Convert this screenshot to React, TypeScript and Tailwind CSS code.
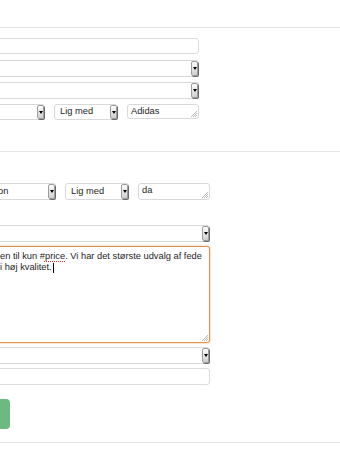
import React from 'react';

// Lille grå "dropdown" knap i højre side af select-feltet
const SelectArrow: React.FC = () => (
  <div className="flex w-[7px] shrink-0 self-stretch items-center justify-center rounded-[2px] border border-[#9c9c9c] bg-linear-to-b from-[#fdfdfd] to-[#cfcfcf] shadow-[1px_1px_0_#6a6a6a]">
    <div className="h-0 w-0 border-l-[2.5px] border-r-[2.5px] border-t-[3px] border-l-transparent border-r-transparent border-t-black" />
  </div>
);

const Grip: React.FC = () => (
  <svg width="7" height="7" viewBox="0 0 7 7" className="absolute bottom-[1px] right-[1px]">
    <path d="M7 1 L1 7 M7 3 L3 7 M7 5 L5 7" stroke="#a8a8a8" strokeWidth="0.8" />
  </svg>
);

interface SelectProps {
  className: string;
  value?: string;
  textClass?: string;
}

const Select: React.FC<SelectProps> = ({ className, value = '', textClass = 'pl-[4px]' }) => (
  <div className={`flex items-stretch rounded-[3px] border border-[#d9d9d9] bg-white ${className}`}>
    <div className={`flex flex-1 items-center overflow-hidden whitespace-nowrap ${textClass}`}>{value}</div>
    <SelectArrow />
  </div>
);

const SmallArea: React.FC<{ className: string; value: string }> = ({ className, value }) => (
  <div className={`relative rounded-[3px] border border-[#d9d9d9] bg-white pl-[3px] pt-[1px] leading-[11px] ${className}`}>
    {value}
    <Grip />
  </div>
);

const Line: React.FC<{ className: string }> = ({ className }) => (
  <div className={`h-px w-full bg-[#e4e4e4] ${className}`} />
);

export default function App() {
  return (
    <div className="h-[453px] w-[340px] overflow-hidden bg-white font-['Liberation_Sans',Arial,sans-serif] text-[9.3px] text-[#1e1e1e]">
      <Line className="mt-[27px]" />

      {/* Første regel */}
      <div className="flex flex-col">
        <div className="-ml-[40px] mt-[10px] h-[16px] w-[239px] rounded-[3px] border border-[#dcdcdc] bg-white" />
        <Select className="-ml-[40px] mt-[6px] h-[17px] w-[239px]" />
        <Select className="-ml-[40px] mt-[5px] h-[17px] w-[239px]" />
        <div className="mt-[5px] flex items-start">
          <Select className="-ml-[40px] h-[16px] w-[85px]" />
          <Select className="ml-[9px] h-[16px] w-[64px]" value="Lig med" textClass="pl-[5px]" />
          <SmallArea className="ml-[9px] h-[15px] w-[72px]" value="Adidas" />
        </div>
      </div>

      <Line className="mt-[31px]" />

      {/* Anden regel */}
      <div className="flex flex-col">
        <div className="mt-[31px] flex items-start">
          <Select className="-ml-[40px] h-[17px] w-[96px]" value="Kollektion" textClass="pl-[7px]" />
          <Select className="ml-[9px] h-[17px] w-[64px]" value="Lig med" textClass="pl-[5px]" />
          <SmallArea className="ml-[9px] h-[17px] w-[72px]" value="da" />
        </div>

        <Select className="-ml-[40px] mt-[25px] h-[17px] w-[250px]" />

        <div className="relative -ml-[40px] mt-[4px] h-[97px] w-[250px] rounded-[3px] border border-[#e0924c] bg-white pl-[39px] pt-[4px] leading-[11px] shadow-[0_0_2px_#e9a469]">
          <div className="whitespace-nowrap">
            en til kun #<span className="underline decoration-dotted decoration-[#e0332f] underline-offset-2">price</span>. Vi har det største udvalg af fede
          </div>
          <div className="flex items-center whitespace-nowrap">
            i høj kvalitet.
            <span className="ml-[1px] inline-block h-[10px] w-px bg-black" />
          </div>
          <Grip />
        </div>

        <Select className="-ml-[40px] mt-[4px] h-[17px] w-[250px]" />
        <div className="-ml-[40px] mt-[4px] h-[17px] w-[250px] rounded-[3px] border border-[#dcdcdc] bg-white" />

        <button className="-ml-[80px] mt-[14px] h-[30px] w-[90px] rounded-[4px] bg-[#6dba81] text-[11px] text-white">
          Gem
        </button>
      </div>

      <Line className="mt-[13px]" />
    </div>
  );
}
